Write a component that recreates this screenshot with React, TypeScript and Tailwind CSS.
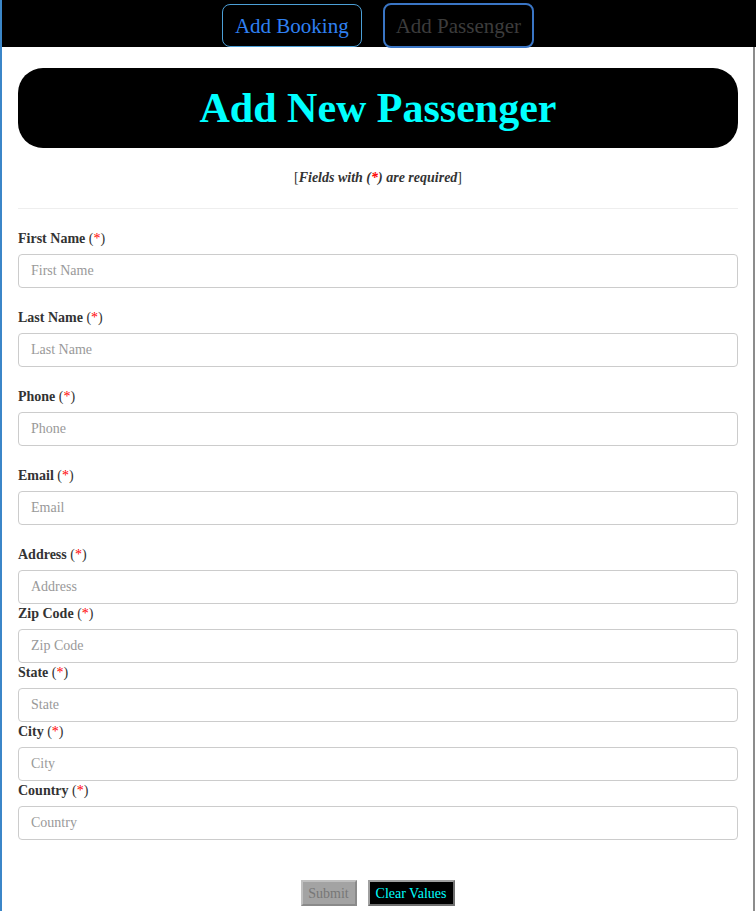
import React from "react";

const fields1 = ["First Name", "Last Name", "Phone", "Email", "Address"];
const fields2 = ["Zip Code", "State", "City", "Country"];

function Label({ text }: { text: string }) {
  return (
    <label className="block h-[19px] leading-[19px] mb-[6px] text-[14px] text-[#333]">
      <span className="font-bold">{text}</span> <span>(</span>
      <span className="text-[#ff0000]">*</span>
      <span>)</span>
    </label>
  );
}

function Input({ text }: { text: string }) {
  return (
    <input
      placeholder={text}
      className="block w-full h-[34px] rounded-[4px] border border-[#cccccc] px-[12px] text-[14px] text-[#555] placeholder:text-[#999] outline-none"
      style={{ fontFamily: '"Liberation Serif", serif' }}
    />
  );
}

export default function App() {
  return (
    <div
      className="min-h-[911px] border-l-2 border-[#3b86c8] bg-white text-[#333]"
      style={{ fontFamily: '"Liberation Serif", "Times New Roman", serif' }}
    >
      <div className="h-[47px] bg-black flex justify-center items-start gap-[21px] pr-[2px]">
        <button className="mt-[4px] h-[43px] pt-[2px] px-[12px] rounded-[8px] border border-[#4c9fd6] text-[21px] text-[#2f80f2] bg-black">
          Add Booking
        </button>
        <button className="mt-[3px] h-[45px] pt-[2px] px-[11px] rounded-[8px] border-2 border-[#3a75c4] text-[21px] text-[#3c3c3c] bg-black">
          Add Passenger
        </button>
      </div>
      <div className="border-r-2 border-[#8c8c8c] mr-[1px] min-h-[864px] pl-[16px] pr-[15px] pt-[21px]">
        <div className="h-[80px] rounded-[25px] bg-black flex items-center justify-center">
          <h1 className="text-[42px] font-bold text-[#00ffff] leading-none">Add New Passenger</h1>
        </div>
        <p className="text-center text-[14px] mt-[22px] h-[16px] leading-[16px] text-[#333]">
          [<i className="font-bold">Fields with (<span className="text-[#ff0000]">*</span>) are required</i>]
        </p>
        <hr className="mt-[22px] border-t border-[#eeeeee]" />
        <div className="mt-[20px]">
          {fields1.map((f, i) => (
            <div key={f} className={i === fields1.length - 1 ? "" : "mb-[20px]"}>
              <Label text={f} />
              <Input text={f} />
            </div>
          ))}
          {fields2.map((f) => (
            <div key={f}>
              <Label text={f} />
              <Input text={f} />
            </div>
          ))}
        </div>
        <div className="flex justify-center gap-[11px] mt-[40px] pr-[1px]">
          <button className="h-[26px] w-[56px] bg-[#a3a3a3] text-[#777] text-[14px] border-2 border-[#c0c0c0] border-r-[#8a8a8a] border-b-[#8a8a8a]">
            Submit
          </button>
          <button className="h-[26px] w-[87px] bg-black text-[#00ffff] text-[14px] border-2 border-[#a0a0a0] border-r-[#707070] border-b-[#707070]">
            Clear Values
          </button>
        </div>
      </div>
    </div>
  );
}
